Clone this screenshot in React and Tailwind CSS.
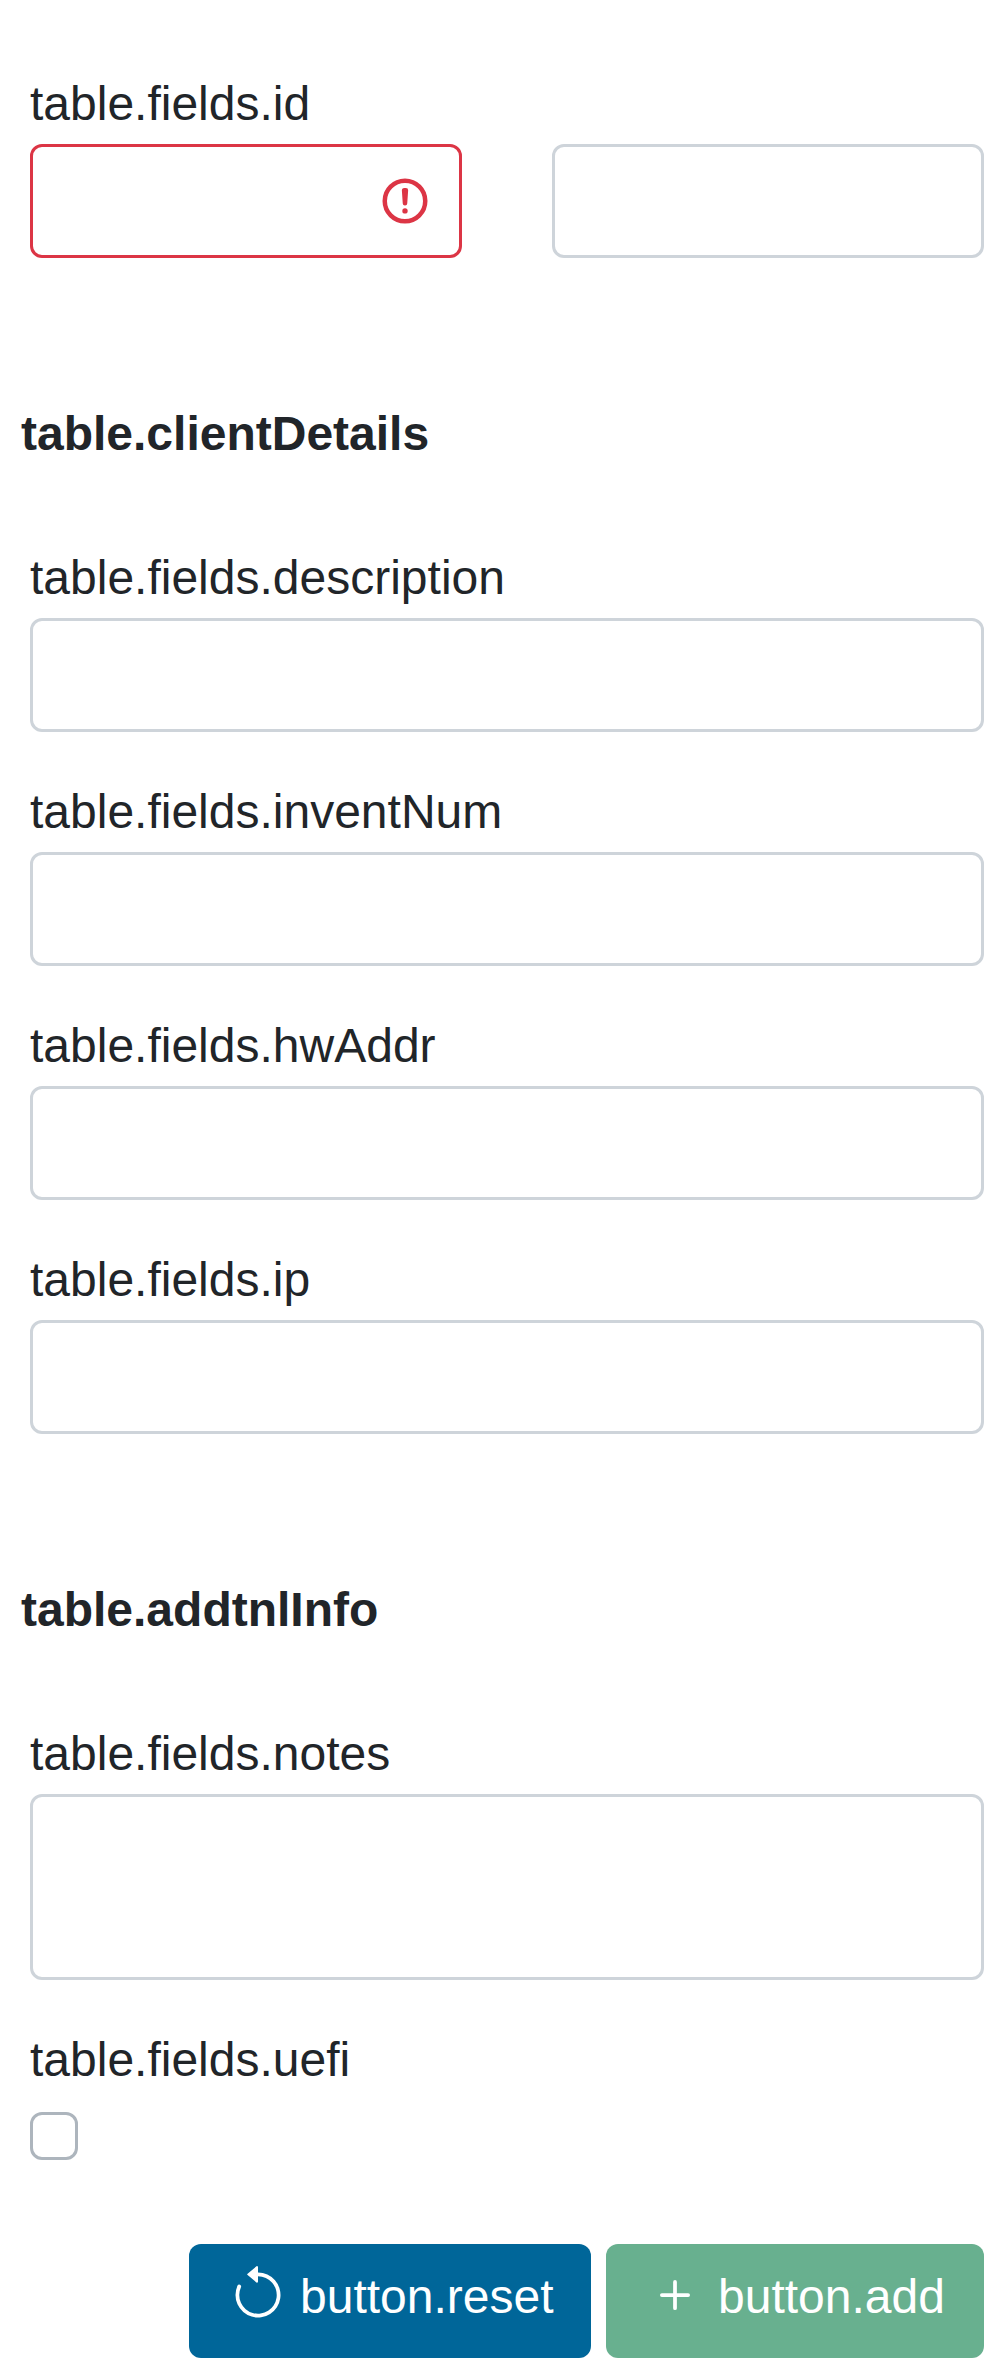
import { BsArrowCounterclockwise, BsPlus } from "react-icons/bs";

const control = "block w-full rounded-xl border-[3px] border-[#ced4da] bg-white px-9 outline-none";

function InvalidIcon() {
  return (
    <svg className="size-[54px] shrink-0" viewBox="0 0 12 12" fill="none" stroke="#dc3545" aria-hidden="true">
      <circle cx="6" cy="6" r="4.5" />
      <path strokeLinejoin="round" d="M5.8 3.6h.4L6 6.5z" />
      <circle cx="6" cy="8.2" r=".6" fill="#dc3545" stroke="none" />
    </svg>
  );
}

function Label({ htmlFor, children }) {
  return (
    <label htmlFor={htmlFor} className="block leading-[72px]">
      {children}
    </label>
  );
}

function TextField({ name }) {
  return (
    <div className="flex flex-col gap-1">
      <Label htmlFor={name}>table.fields.{name}</Label>
      <input id={name} type="text" className={control + " h-[114px]"} />
    </div>
  );
}

function SectionTitle({ children }) {
  return <h2 className="mt-[140px] mb-[72px] pl-[21px] font-bold leading-[72px]">{children}</h2>;
}

export default function App() {
  return (
    <form className="flex min-h-[2358px] w-[984px] flex-col bg-white pt-[68px] font-['Liberation_Sans',Arial,sans-serif] text-[48px] text-[#212529]">
      <div className="flex flex-col gap-1 pl-[30px]">
        <Label htmlFor="id">table.fields.id</Label>
        <div className="grid grid-cols-2 gap-[90px]">
          <div className="flex h-[114px] items-center rounded-xl border-[3px] border-[#dc3545] bg-white pr-[27px] pl-9">
            <input id="id" type="text" className="min-w-0 flex-1 outline-none" />
            <InvalidIcon />
          </div>
          <input type="text" className={control + " h-[114px]"} />
        </div>
      </div>

      <SectionTitle>table.clientDetails</SectionTitle>
      <div className="flex flex-col gap-11 pl-[30px]">
        <TextField name="description" />
        <TextField name="inventNum" />
        <TextField name="hwAddr" />
        <TextField name="ip" />
      </div>

      <SectionTitle>table.addtnlInfo</SectionTitle>
      <div className="flex flex-col gap-11 pl-[30px]">
        <div className="flex flex-col gap-1">
          <Label htmlFor="notes">table.fields.notes</Label>
          <textarea id="notes" className={control + " h-[186px] resize-none"} />
        </div>
        <div className="flex flex-col gap-4">
          <Label htmlFor="uefi">table.fields.uefi</Label>
          <input
            id="uefi"
            type="checkbox"
            className="size-12 appearance-none rounded-xl border-[3px] border-[#adb5bd] bg-white"
          />
        </div>
      </div>

      <div className="mt-[84px] flex justify-end gap-[15px] leading-[64px] whitespace-nowrap text-white">
        <button
          type="reset"
          className="flex h-[114px] w-[402px] items-start rounded-xl bg-[#006699] pt-[21px] pl-[39px]"
        >
          <BsArrowCounterclockwise className="mr-3 size-[60px] shrink-0" />
          button.reset
        </button>
        <button
          type="submit"
          disabled
          className="flex h-[114px] w-[378px] items-start rounded-xl bg-[#198754] pt-[21px] pl-[39px] opacity-65"
        >
          <BsPlus className="mr-[13px] size-[60px] shrink-0" />
          button.add
        </button>
      </div>
    </form>
  );
}
